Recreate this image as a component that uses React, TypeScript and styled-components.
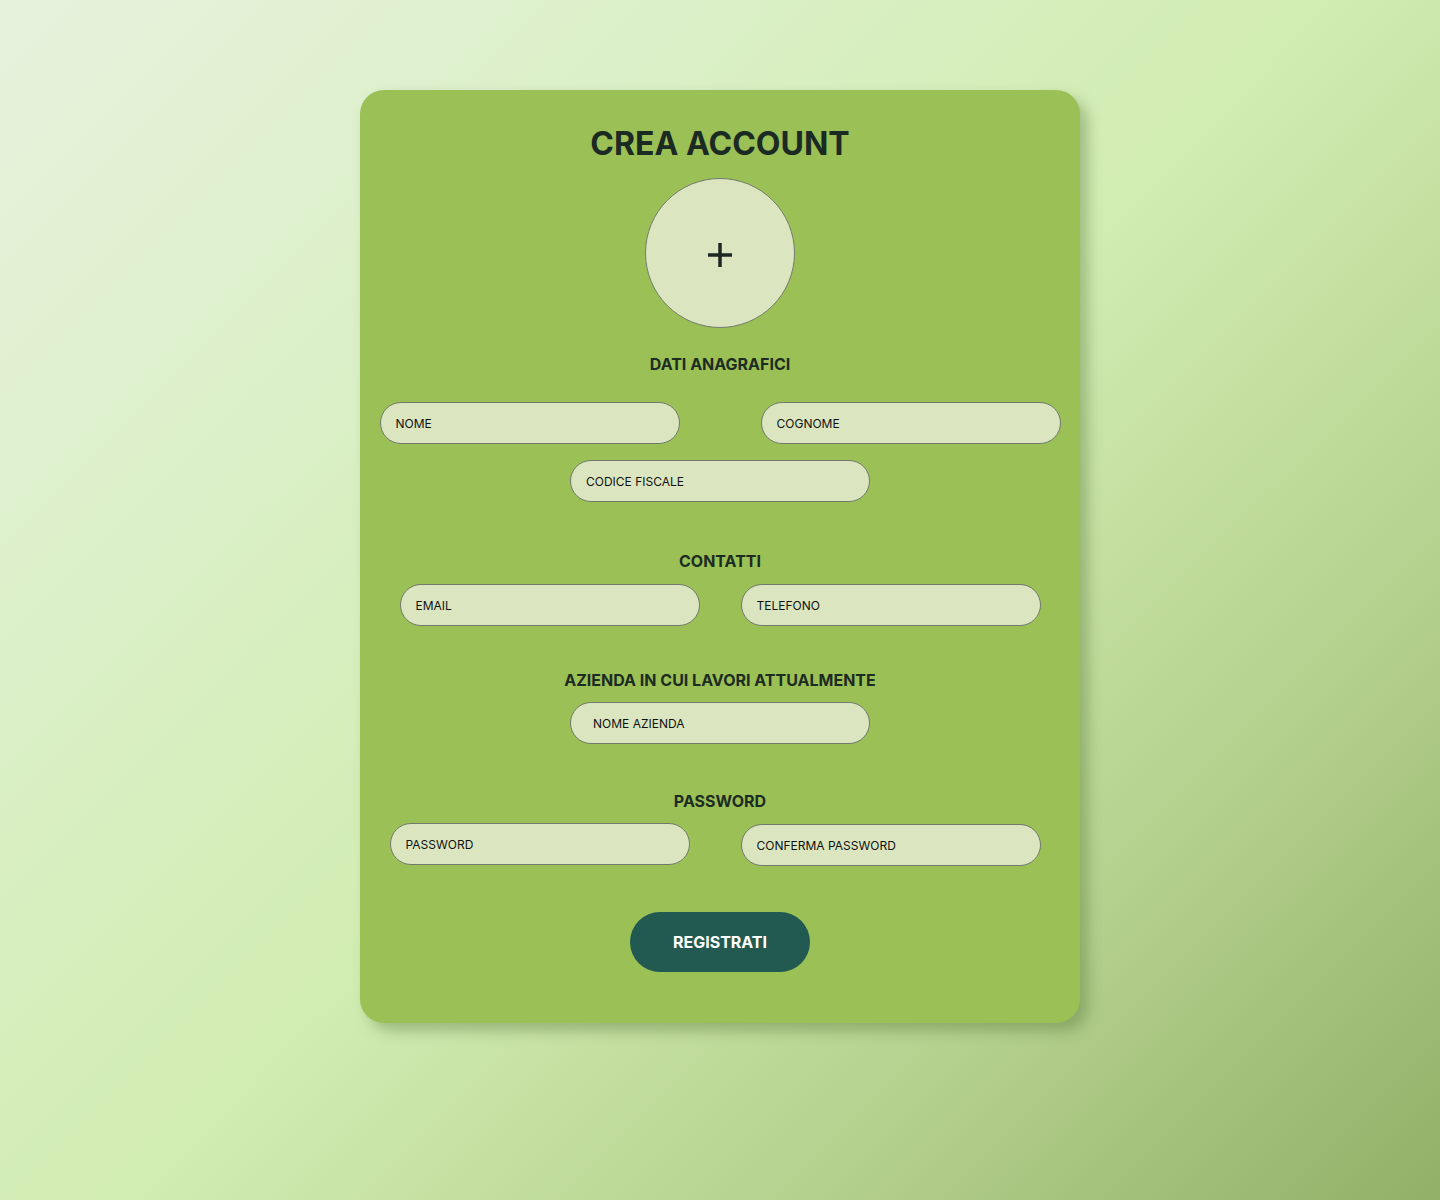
import React from "react";
import styled, { createGlobalStyle } from "styled-components";

const GlobalStyle = createGlobalStyle`
  html, body {
    margin: 0;
    padding: 0;
  }
  body {
    font-family: Inter, "Noto Sans", sans-serif;
    min-height: 1200px;
    background: linear-gradient(135deg, #e7f2dd 0%, #d9efc4 30%, #d2edb2 50%, #b6d28f 75%, #92b068 100%);
  }
`;

const Page = styled.div`
  display: flex;
  justify-content: center;
  align-items: flex-start;
  padding-top: 90px;
  min-height: 1200px;
  box-sizing: border-box;
`;

const Card = styled.form`
  width: 720px;
  box-sizing: border-box;
  background: #9bc056;
  border-radius: 24px;
  box-shadow: 8px 8px 14px rgba(70, 100, 40, 0.35);
  padding: 34px 0 51px;
  display: flex;
  flex-direction: column;
  align-items: center;
`;

const Title = styled.h1`
  margin: 0;
  font-size: 32px;
  font-weight: 700;
  line-height: 40px;
  color: #1b2a22;
`;

const Avatar = styled.button`
  margin-top: 14px;
  width: 150px;
  height: 150px;
  border-radius: 50%;
  background: #dbe5c0;
  border: 1px solid #727c6c;
  display: flex;
  align-items: center;
  justify-content: center;
  padding: 4px 0 0;
  cursor: pointer;
`;

const Section = styled.h2<{ $top: number }>`
  margin: ${(p) => p.$top}px 0 0;
  font-size: 16px;
  font-weight: 700;
  line-height: 20px;
  color: #1d2c22;
`;

const Row = styled.div<{ $gap: number; $top: number; $shift?: number }>`
  display: flex;
  justify-content: center;
  align-items: flex-start;
  gap: ${(p) => p.$gap}px;
  margin-top: ${(p) => p.$top}px;
  padding-right: ${(p) => p.$shift ?? 0}px;
`;

const Field = styled.input<{ $pad?: number; $drop?: number }>`
  width: 300px;
  height: 42px;
  box-sizing: border-box;
  border-radius: 21px;
  border: 1px solid #717a6c;
  background: #dbe6c0;
  padding: 0 0 0 ${(p) => p.$pad ?? 15}px;
  margin-top: ${(p) => p.$drop ?? 0}px;
  font-family: Inter, "Noto Sans", sans-serif;
  font-size: 12px;
  color: #111111;
  outline: none;

  &::placeholder {
    color: #111111;
    opacity: 1;
  }
`;

const Submit = styled.button`
  margin-top: 46px;
  width: 180px;
  height: 60px;
  border-radius: 30px;
  border: none;
  background: #225951;
  color: #ffffff;
  font-family: Inter, "Noto Sans", sans-serif;
  font-size: 16px;
  font-weight: 700;
  cursor: pointer;
`;

export default function App() {
  return (
    <>
      <GlobalStyle />
      <Page>
        <Card onSubmit={(e) => e.preventDefault()}>
          <Title>CREA ACCOUNT</Title>
          <Avatar type="button" aria-label="Aggiungi foto">
            <svg width="26" height="26" viewBox="0 0 26 26">
              <path d="M13 1v24M1 13h24" stroke="#1d2824" strokeWidth="3.5" />
            </svg>
          </Avatar>

          <Section $top={26}>DATI ANAGRAFICI</Section>
          <Row $gap={81} $top={28}>
            <Field placeholder="NOME" />
            <Field placeholder="COGNOME" />
          </Row>
          <Row $gap={0} $top={16}>
            <Field placeholder="CODICE FISCALE" />
          </Row>

          <Section $top={49}>CONTATTI</Section>
          <Row $gap={41} $top={13}>
            <Field placeholder="EMAIL" />
            <Field placeholder="TELEFONO" />
          </Row>

          <Section $top={44}>AZIENDA IN CUI LAVORI ATTUALMENTE</Section>
          <Row $gap={0} $top={12}>
            <Field placeholder="NOME AZIENDA" $pad={22} />
          </Row>

          <Section $top={47}>PASSWORD</Section>
          <Row $gap={51} $top={12} $shift={10}>
            <Field placeholder="PASSWORD" type="password" />
            <Field placeholder="CONFERMA PASSWORD" type="password" $drop={1} />
          </Row>

          <Submit type="submit">REGISTRATI</Submit>
        </Card>
      </Page>
    </>
  );
}
